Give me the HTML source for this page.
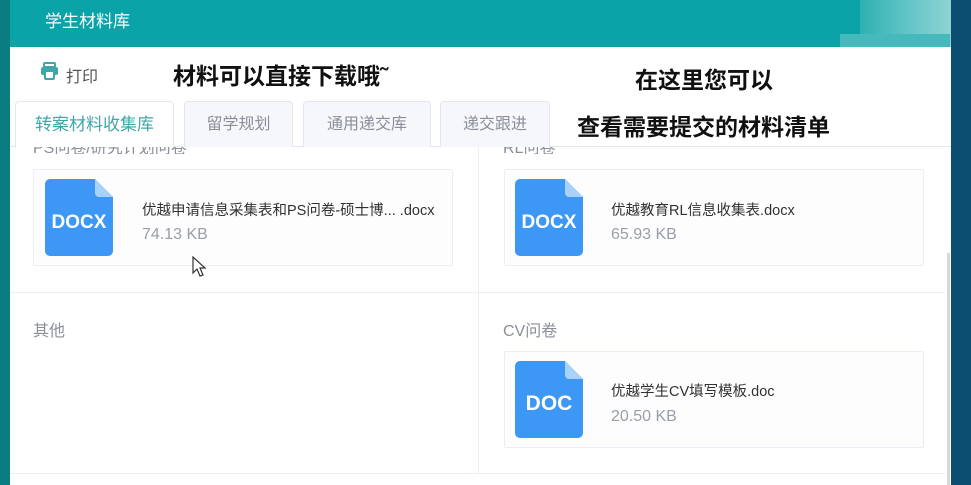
<!DOCTYPE html>
<html><head><meta charset="utf-8"><style>
*{margin:0;padding:0;box-sizing:border-box}
body{width:971px;height:485px;overflow:hidden;position:relative;background:#0c4d72;font-family:"Liberation Sans","Noto Sans CJK SC",sans-serif}
.abs{position:absolute}
.hdr{left:0;top:0;width:951px;height:47px;background:#0aa4a8}
.strip{left:0;top:0;width:10px;height:485px;background:#0b7d80}
.panel{left:10px;top:47px;width:941px;height:438px;background:#fff}
.t{white-space:nowrap}
.tab{top:101px;height:46px;border:1px solid #e4e7ed;border-bottom:none;background:#f5f7fa;color:#8a8f99;font-size:16px;line-height:46px;text-align:center;border-radius:4px 4px 0 0}
.card{border:1px solid #ebeef5;background:#fdfdfd;border-radius:2px}
.ic{width:68px;height:77px}
.fn{font-size:14.5px;color:#303133}
.sz{font-size:16px;color:#999ea8}
.ann{font-size:23px;font-weight:bold;color:#111}
.lbl{font-size:16px;color:#8a8f99}
</style></head><body>
<div class="abs hdr"></div>
<div class="abs" style="left:860px;top:0;width:91px;height:50px;background:linear-gradient(90deg,#2fb0b2,#5fc4c5,#8fd3d4)"></div>
<div class="abs" style="left:840px;top:34px;width:110px;height:16px;background:#45b9bb"></div>
<div class="abs strip"></div>
<div class="abs panel"></div>
<div class="abs t" style="left:45px;top:7px;color:#fff;font-size:17px">学生材料库</div>
<svg class="abs" style="left:40px;top:62px" width="19" height="18" viewBox="0 0 19 18"><rect x="4" y="1" width="11" height="4" rx="1" fill="none" stroke="#3ea8a8" stroke-width="2"/><rect x="1" y="5" width="17" height="8" rx="2" fill="#3ea8a8"/><rect x="5" y="9" width="9" height="8" rx="1" fill="#fff" stroke="#3ea8a8" stroke-width="2"/></svg>
<div class="abs t" style="left:66px;top:63px;font-size:16px;color:#555">打印</div>
<div class="abs t ann" style="left:173px;top:57px">材料可以直接下载哦˜</div>
<div class="abs t ann" style="left:635px;top:61px">在这里您可以</div>
<div class="abs t ann" style="left:577px;top:108px">查看需要提交的材料清单</div>
<div class="abs" style="left:10px;top:146px;width:941px;height:1px;background:#e4e7ed"></div>
<div class="abs tab" style="left:15px;width:159px;background:#fff;color:#3fa7a8;height:47px;font-size:17px">转案材料收集库</div>
<div class="abs tab" style="left:184px;width:109px">留学规划</div>
<div class="abs tab" style="left:303px;width:128px">通用递交库</div>
<div class="abs tab" style="left:440px;width:110px">递交跟进</div>
<div class="abs" style="left:33px;top:147px;width:260px;height:7px;overflow:hidden"><div class="t lbl" style="margin-top:-13px">PS问卷/研究计划问卷</div></div>
<div class="abs" style="left:503px;top:147px;width:100px;height:7px;overflow:hidden"><div class="t lbl" style="margin-top:-13px">RL问卷</div></div>
<div class="abs" style="left:478px;top:147px;width:1px;height:326px;background:#ebeef5"></div>
<div class="abs" style="left:10px;top:292px;width:935px;height:1px;background:#ebeef5"></div>
<div class="abs" style="left:10px;top:473px;width:935px;height:1px;background:#ebeef5"></div>
<div class="abs" style="left:947px;top:253px;width:3px;height:232px;background:#d8d8d8"></div>

<div class="abs card" style="left:33px;top:169px;width:420px;height:97px"></div>
<div class="abs card" style="left:504px;top:169px;width:420px;height:97px"></div>
<div class="abs card" style="left:504px;top:351px;width:420px;height:97px"></div>

<svg class="abs ic" style="left:45px;top:179px" viewBox="0 0 68 77"><path d="M5 0H50L68 18V72a5 5 0 0 1-5 5H5a5 5 0 0 1-5-5V5a5 5 0 0 1 5-5z" fill="#3d97f5"/><path d="M50 0L68 18H54a4 4 0 0 1-4-4z" fill="#a9d2fb"/><text x="34" y="49" font-family="Liberation Sans" font-weight="bold" font-size="19" fill="#fff" text-anchor="middle">DOCX</text></svg>
<svg class="abs ic" style="left:515px;top:179px" viewBox="0 0 68 77"><path d="M5 0H50L68 18V72a5 5 0 0 1-5 5H5a5 5 0 0 1-5-5V5a5 5 0 0 1 5-5z" fill="#3d97f5"/><path d="M50 0L68 18H54a4 4 0 0 1-4-4z" fill="#a9d2fb"/><text x="34" y="49" font-family="Liberation Sans" font-weight="bold" font-size="19" fill="#fff" text-anchor="middle">DOCX</text></svg>
<svg class="abs ic" style="left:515px;top:361px" viewBox="0 0 68 77"><path d="M5 0H50L68 18V72a5 5 0 0 1-5 5H5a5 5 0 0 1-5-5V5a5 5 0 0 1 5-5z" fill="#3d97f5"/><path d="M50 0L68 18H54a4 4 0 0 1-4-4z" fill="#a9d2fb"/><text x="34" y="49" font-family="Liberation Sans" font-weight="bold" font-size="21" fill="#fff" text-anchor="middle">DOC</text></svg>

<div class="abs t fn" style="left:142px;top:199px">优越申请信息采集表和PS问卷-硕士博...&nbsp;.docx</div>
<div class="abs t sz" style="left:142px;top:226px">74.13 KB</div>
<div class="abs t fn" style="left:611px;top:199px">优越教育RL信息收集表.docx</div>
<div class="abs t sz" style="left:611px;top:226px">65.93 KB</div>
<div class="abs t lbl" style="left:33px;top:317px">其他</div>
<div class="abs t lbl" style="left:503px;top:317px">CV问卷</div>
<div class="abs t fn" style="left:611px;top:380px">优越学生CV填写模板.doc</div>
<div class="abs t sz" style="left:611px;top:408px">20.50 KB</div>
<svg class="abs" style="left:192px;top:256px" width="16" height="22" viewBox="0 0 16 22"><path d="M1 1V17L5 13L8 20L11 19L8 12H13Z" fill="#fff" stroke="#333" stroke-width="1.2"/></svg>
</body></html>
